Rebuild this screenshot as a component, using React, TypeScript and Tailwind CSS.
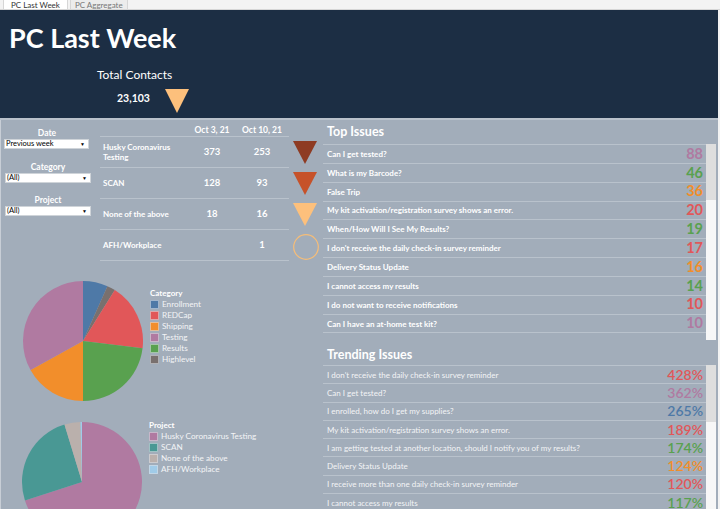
import React from 'react';

const C = {
  blue: '#4e79a7',
  red: '#e15759',
  orange: '#f28e2b',
  pink: '#b07aa1',
  green: '#59a14f',
  brown: '#79706e',
  teal: '#499894',
  gray: '#bab0ac',
  lightBlue: '#a0cbe8',
};

type Slice = { from: number; to: number; color: string };

function arc(cx: number, cy: number, r: number, a0: number, a1: number) {
  const rad = (a: number) => (a * Math.PI) / 180;
  const x0 = cx + r * Math.sin(rad(a0));
  const y0 = cy - r * Math.cos(rad(a0));
  const x1 = cx + r * Math.sin(rad(a1));
  const y1 = cy - r * Math.cos(rad(a1));
  const large = a1 - a0 > 180 ? 1 : 0;
  return `M${cx},${cy} L${x0},${y0} A${r},${r} 0 ${large} 1 ${x1},${y1} Z`;
}

function Pie({ slices }: { slices: Slice[] }) {
  return (
    <svg width="124" height="124" viewBox="0 0 124 124" className="shrink-0">
      {slices.map((s, i) => (
        <path key={i} d={arc(62, 62, 60, s.from, s.to)} fill={s.color} />
      ))}
    </svg>
  );
}

function Legend({ title, items }: { title: string; items: [string, string][] }) {
  return (
    <div className="pt-[9px] pl-[5px]">
      <div className="text-[8px] font-bold text-white leading-[10px]">{title}</div>
      <div className="mt-[1px] flex flex-col">
        {items.map(([label, color]) => (
          <div key={label} className="flex items-center gap-[3px] h-[11px]">
            <span className="w-[9px] h-[9px] border border-[#d9dee4]/60" style={{ backgroundColor: color }} />
            <span className="text-[8.2px] text-[#f3f4f6] leading-none">{label}</span>
          </div>
        ))}
      </div>
    </div>
  );
}

function Select({ value, w }: { value: string; w: string }) {
  return (
    <div className={`${w} h-[10px] bg-white border border-[#cfd4d9] flex items-center justify-between px-[1px]`}>
      <span className="text-[7.5px] text-black leading-none">{value}</span>
      <span className="text-[5px] text-black leading-none pr-[2px]">▼</span>
    </div>
  );
}

function Tri({ color }: { color: string }) {
  return (
    <svg width="24" height="23" viewBox="0 0 24 23">
      <polygon points="0,0 24,0 12,23" fill={color} />
    </svg>
  );
}

const tableRows: { name: React.ReactNode; a: string; b: string; mark: React.ReactNode }[] = [
  { name: <>Husky Coronavirus<br />Testing</>, a: '373', b: '253', mark: <Tri color="#8e3b23" /> },
  { name: 'SCAN', a: '128', b: '93', mark: <Tri color="#c6522a" /> },
  { name: 'None of the above', a: '18', b: '16', mark: <Tri color="#fdc07c" /> },
  {
    name: 'AFH/Workplace',
    a: '',
    b: '1',
    mark: (
      <svg width="26" height="26" viewBox="0 0 26 26">
        <circle cx="13" cy="13" r="12.3" fill="none" stroke="#f6bd78" strokeWidth="1.2" />
      </svg>
    ),
  },
];

const topIssues: [string, string, string][] = [
  ['Can I get tested?', '88', C.pink],
  ['What is my Barcode?', '46', C.green],
  ['False Trip', '36', C.orange],
  ['My kit activation/registration survey shows an error.', '20', C.red],
  ['When/How Will I See My Results?', '19', C.green],
  ["I don't receive the daily check-in survey reminder", '17', C.red],
  ['Delivery Status Update', '16', C.orange],
  ['I cannot access my results', '14', C.green],
  ['I do not want to receive notifications', '10', C.red],
  ['Can I have an at-home test kit?', '10', C.pink],
  ['', '', C.pink],
];

const trending: [string, string, string][] = [
  ["I don't receive the daily check-in survey reminder", '428%', C.red],
  ['Can I get tested?', '362%', C.pink],
  ['I enrolled, how do I get my supplies?', '265%', C.blue],
  ['My kit activation/registration survey shows an error.', '189%', C.red],
  ['I am getting tested at another location, should I notify you of my results?', '174%', C.green],
  ['Delivery Status Update', '124%', C.orange],
  ['I receive more than one daily check-in survey reminder', '120%', C.red],
  ['I cannot access my results', '117%', C.green],
];

export default function App() {
  return (
    <div
      className="w-[720px] h-[509px] overflow-hidden bg-[#f3f3f3] flex flex-col"
      style={{ fontFamily: 'Lato, "Open Sans", sans-serif' }}
    >
      {/* tabs */}
      <div className="h-[10px] flex items-end pl-[3px] gap-[2px] bg-[#f3f3f3] border-b border-[#d6d6d6]">
        <div className="h-[10px] px-[7px] bg-white border-x border-t border-[#d6d6d6] text-[8px] leading-[10px] text-[#333]">
          PC Last Week
        </div>
        <div className="h-[10px] px-[4px] bg-[#ececec] border-x border-t border-[#d6d6d6] text-[8px] leading-[10px] text-[#777]">
          PC Aggregate
        </div>
      </div>

      <div className="flex-1 w-[718px] flex flex-col">
        {/* header */}
        <div className="h-[110px] bg-[#1c2e44] border-b-2 border-[#b9c1cb] relative">
          <div className="pl-[9px] pt-[12px] text-[27px] font-bold text-white leading-[32px]">
            PC Last Week
          </div>
          <div className="pl-[97px] pt-[13px] text-[12px] text-white leading-[16px]">Total Contacts</div>
          <div className="flex items-center pl-[117px] pt-[2px]">
            <span className="text-[10.5px] font-bold text-white">23,103</span>
            <svg width="24" height="24" viewBox="0 0 24 24" className="ml-[15px] mt-[4px]">
              <polygon points="0,0 24,0 12,24" fill="#fdc07c" />
            </svg>
          </div>
        </div>

        {/* body */}
        <div className="flex-1 bg-[#a2adba] border-l border-[#c8ced6] flex overflow-hidden">
          {/* left */}
          <div className="w-[322px] flex flex-col">
            <div className="flex h-[145px]">
              {/* filters */}
              <div className="w-[99px] pl-[3px] pt-[8px] flex flex-col">
                <div className="text-[8.5px] font-bold text-white text-center w-[86px] leading-[10px]">Date</div>
                <div className="mt-[1px]"><Select value="Previous week" w="w-[85px]" /></div>
                <div className="mt-[13px] text-[8.5px] font-bold text-white text-center w-[88px] leading-[10px]">Category</div>
                <div className="mt-[1px] pl-[1px]"><Select value="(All)" w="w-[86px]" /></div>
                <div className="mt-[12px] text-[8.5px] font-bold text-white text-center w-[88px] leading-[10px]">Project</div>
                <div className="mt-[1px] pl-[1px]"><Select value="(All)" w="w-[86px]" /></div>
              </div>

              {/* table */}
              <div className="w-[189px] flex flex-col">
                <div className="h-[16px] pt-[4px] flex items-center text-[8.5px] font-bold text-white">
                  <div className="w-[89px]" />
                  <div className="w-[46px] text-center">Oct 3, 21</div>
                  <div className="w-[54px] text-center">Oct 10, 21</div>
                </div>
                {tableRows.map((r, i) => (
                  <div key={i} className="h-[31px] border-t border-[#b9c2cc] flex items-center text-white font-bold">
                    <div className="w-[89px] pl-[3px] text-[8px] leading-[10px]">{r.name}</div>
                    <div className="w-[46px] text-center text-[9.5px]">{r.a}</div>
                    <div className="w-[54px] text-center text-[9.5px]">{r.b}</div>
                  </div>
                ))}
                <div className="border-t border-[#b9c2cc]" />
              </div>

              {/* markers */}
              <div className="w-[34px] flex flex-col items-start pl-[4px] pt-[21px]">
                {tableRows.map((r, i) => (
                  <div key={i} className="h-[31px] flex items-start">{r.mark}</div>
                ))}
              </div>
            </div>

            {/* pies */}
            <div className="flex pl-[20px] pt-[14px]">
              <Pie
                slices={[
                  { from: 0, to: 24, color: C.blue },
                  { from: 24, to: 32, color: C.brown },
                  { from: 32, to: 97, color: C.red },
                  { from: 97, to: 180, color: C.green },
                  { from: 180, to: 241, color: C.orange },
                  { from: 241, to: 360, color: C.pink },
                ]}
              />
              <Legend
                title="Category"
                items={[
                  ['Enrollment', C.blue],
                  ['REDCap', C.red],
                  ['Shipping', C.orange],
                  ['Testing', C.pink],
                  ['Results', C.green],
                  ['Highlevel', C.brown],
                ]}
              />
            </div>
            <div className="flex pl-[19px] pt-[17px]">
              <Pie
                slices={[
                  { from: 0, to: 252, color: C.pink },
                  { from: 252, to: 343, color: C.teal },
                  { from: 343, to: 358.5, color: C.gray },
                  { from: 358.5, to: 360, color: C.lightBlue },
                ]}
              />
              <div className="-mt-[9px]">
                <Legend
                  title="Project"
                  items={[
                    ['Husky Coronavirus Testing', C.pink],
                    ['SCAN', C.teal],
                    ['None of the above', C.gray],
                    ['AFH/Workplace', C.lightBlue],
                  ]}
                />
              </div>
            </div>
          </div>

          {/* right */}
          <div className="flex-1 flex flex-col">
            <div className="h-[24px] pl-[4px] pt-[4px] text-[12.5px] font-bold text-white leading-[16px]">Top Issues</div>
            <div className="flex h-[196px]">
              <div className="w-[383px] overflow-hidden border-t border-[#b9c2cc]">
                {topIssues.map(([t, v, c], i) => (
                  <div key={i} className="h-[18.85px] border-b border-[#b9c2cc] flex items-center justify-between pl-[4px] pr-[3px]">
                    <span className="text-[8px] font-bold text-white leading-none">{t}</span>
                    <span className="text-[14.5px] font-bold leading-none" style={{ color: c }}>{v}</span>
                  </div>
                ))}
              </div>
              <div className="w-[10px] flex flex-col">
                <div className="h-[56px] bg-[#dedede]" />
                <div className="flex-1 bg-[#f7f7f7]" />
              </div>
            </div>
            <div className="h-[25px] pl-[4px] pt-[7px] text-[12.5px] font-bold text-white leading-[16px]">Trending Issues</div>
            <div className="flex flex-1">
              <div className="w-[383px] border-t border-[#b9c2cc]">
                {trending.map(([t, v, c], i) => (
                  <div key={i} className="h-[18.3px] border-b border-[#b9c2cc] flex items-center justify-between pl-[4px] pr-[3px]">
                    <span className="text-[8px] text-[#f3f4f6] leading-none">{t}</span>
                    <span className="text-[14px] font-semibold leading-none" style={{ color: c }}>{v}</span>
                  </div>
                ))}
              </div>
              <div className="w-[10px] flex flex-col">
                <div className="h-[57px] bg-[#dedede]" />
                <div className="flex-1 bg-[#f7f7f7]" />
              </div>
            </div>
          </div>
        </div>
      </div>
    </div>
  );
}
